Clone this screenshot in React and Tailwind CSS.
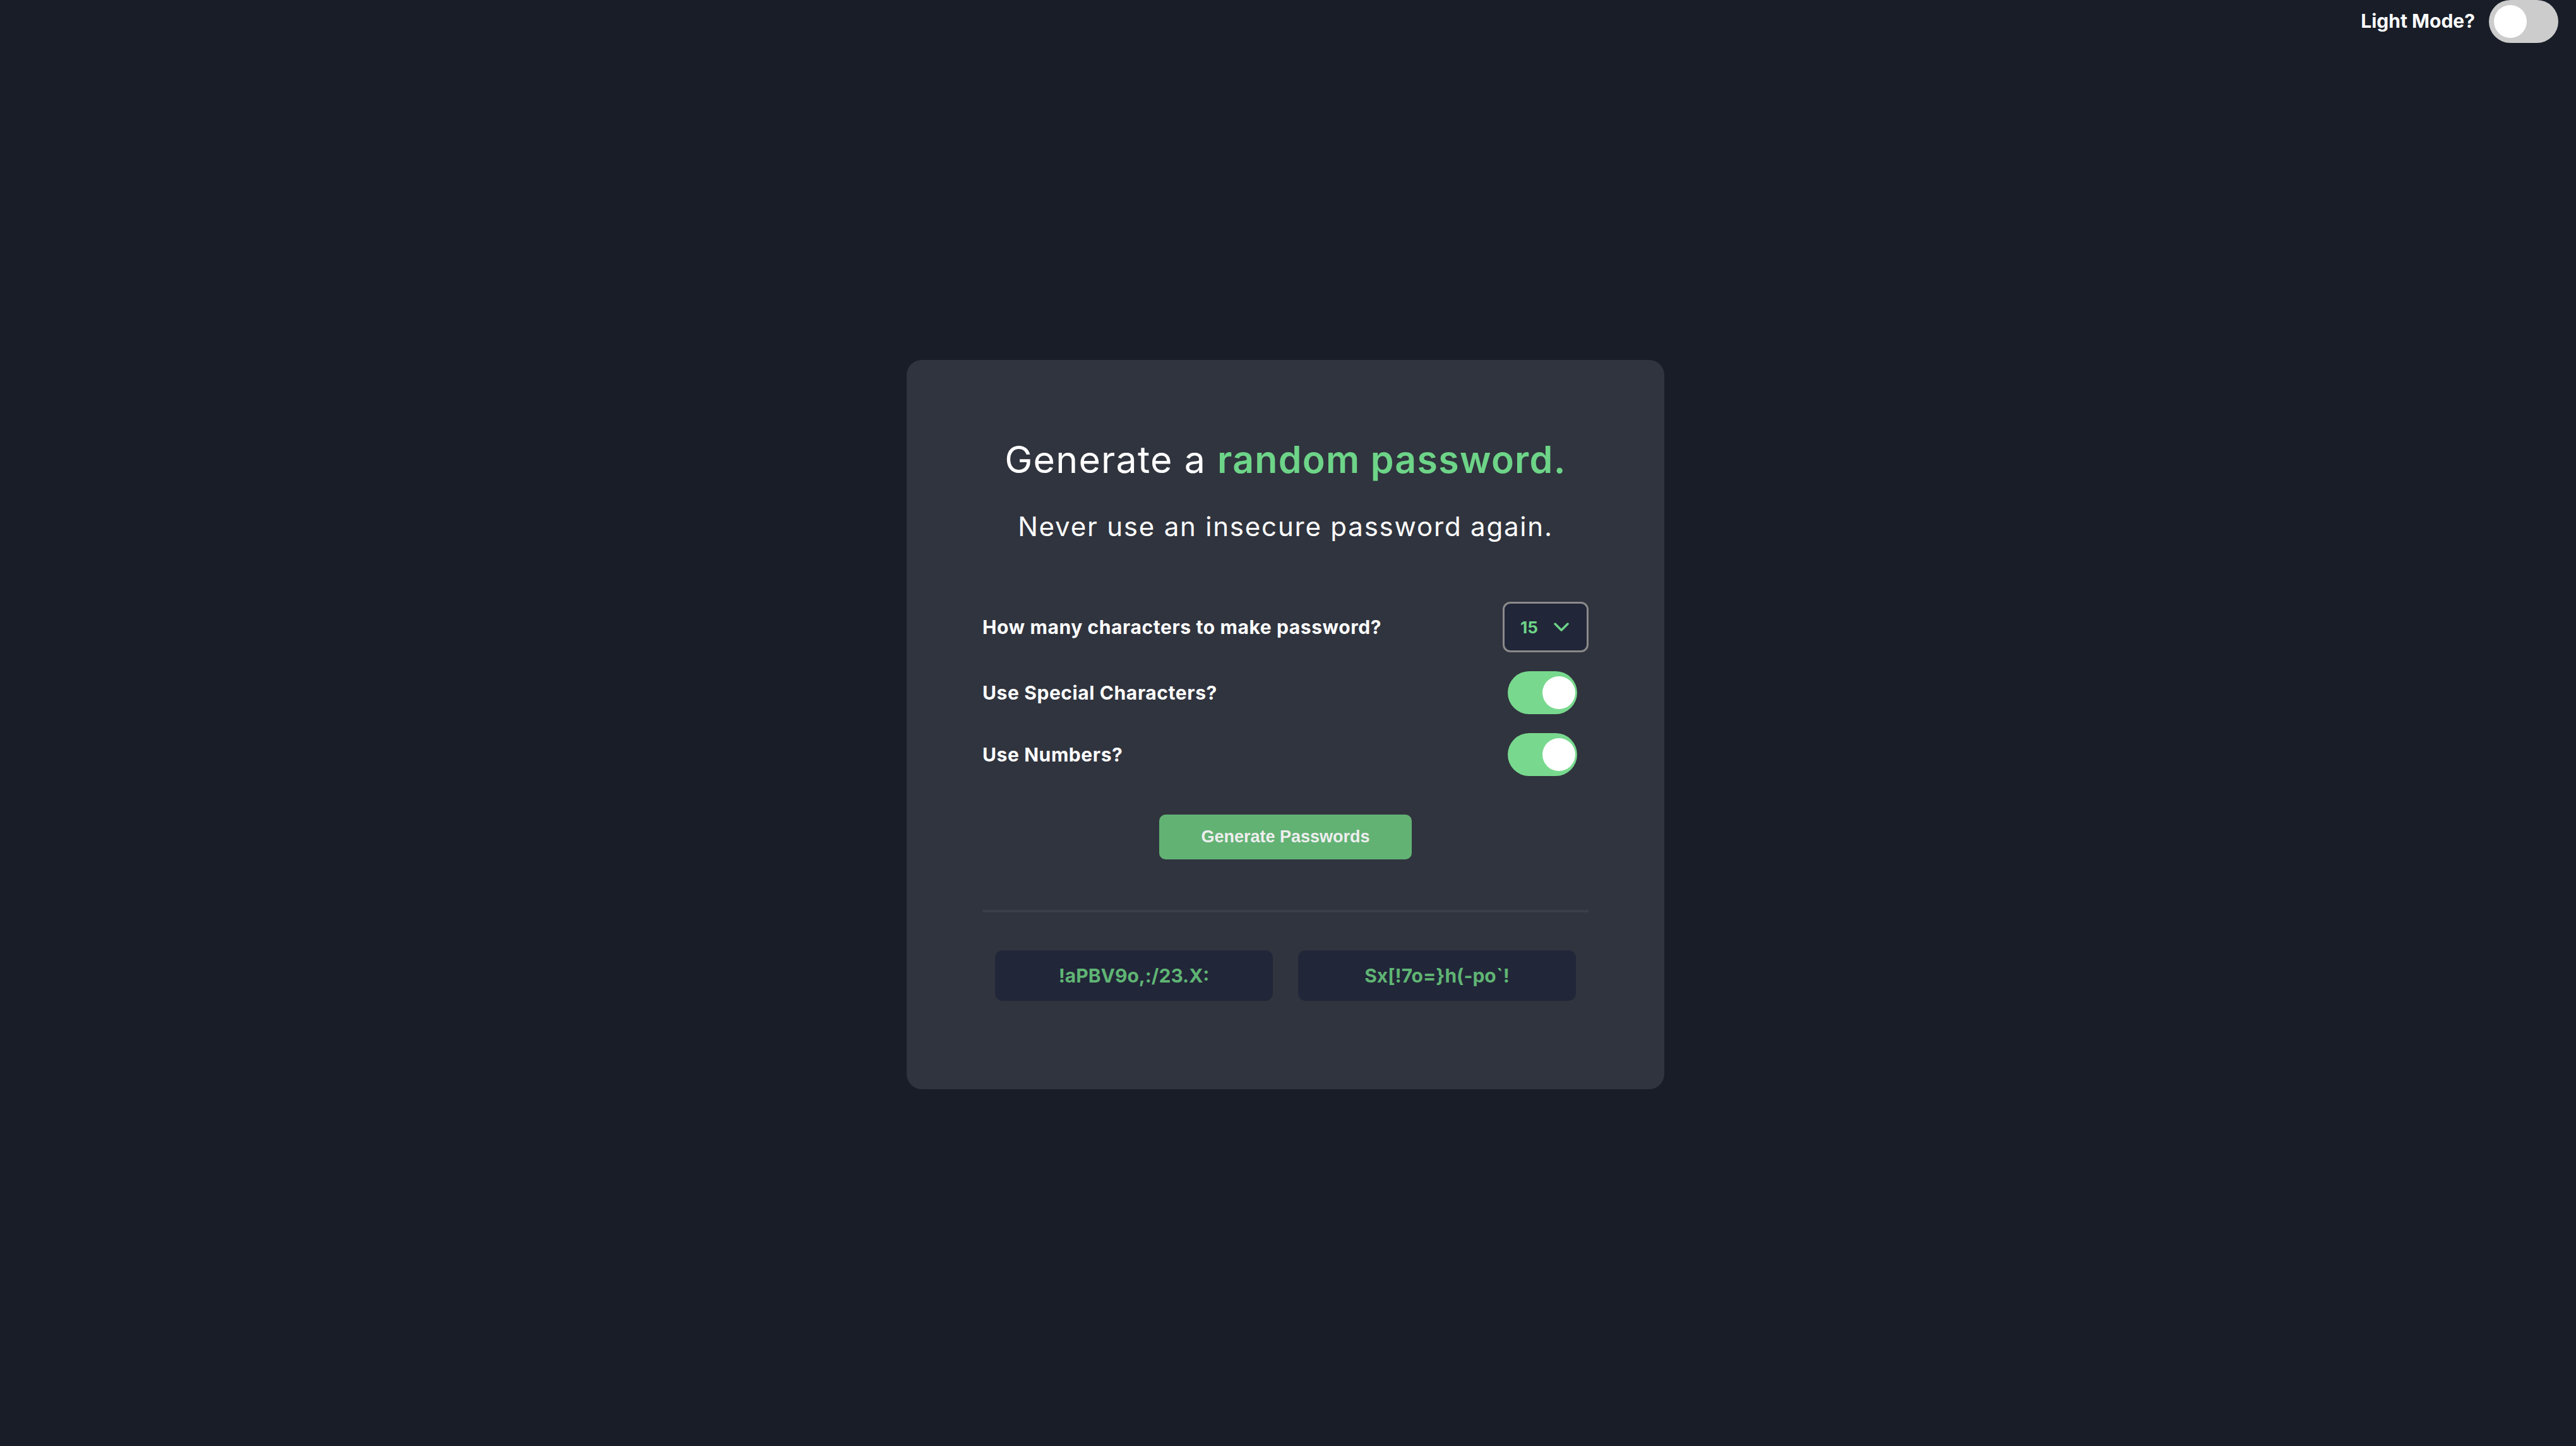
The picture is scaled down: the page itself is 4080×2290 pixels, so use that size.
import React, { useState } from 'react';

function Toggle({ on, onChange, light }) {
  return (
    <button
      onClick={onChange}
      className={`flex h-[68px] w-[110px] shrink-0 items-center rounded-full ${
        light ? 'bg-[#cccccc]' : on ? 'bg-[#78d98e]' : 'bg-[#cccccc]'
      } ${on ? 'justify-end pr-[3px]' : 'justify-start pl-[8px]'}`}
    >
      <span className="block h-[52px] w-[52px] rounded-full bg-white" />
    </button>
  );
}

function App() {
  const [light, setLight] = useState(false);
  const [special, setSpecial] = useState(true);
  const [numbers, setNumbers] = useState(true);
  const passwords = ['!aPBV9o,:/23.X:', 'Sx[!7o=}h(-po`!'];

  return (
    <div className="flex min-h-screen w-full flex-col bg-[#181d28] font-['Inter',sans-serif] text-white">
      <header className="flex h-[67px] items-center justify-end gap-[22px] pr-[28px]">
        <span className="text-[30px] font-bold">Light Mode?</span>
        <Toggle on={light} light onChange={() => setLight(!light)} />
      </header>

      <main className="flex flex-1 items-center justify-center pb-[62px] pr-[8px]">
        <div className="flex w-[1200px] flex-col items-center rounded-[24px] bg-[#30343e] px-[120px] pb-[140px] pt-[122px]">
          <h1 className="text-[59px] leading-[72px] font-normal tracking-[1.3px]">
            Generate a <span className="font-semibold text-[#6dd488]">random password.</span>
          </h1>
          <p className="mt-[45px] text-[42px] leading-[50px] tracking-[1.8px]">Never use an insecure password again.</p>

          <div className="mt-[94px] flex w-full flex-col gap-[30px]">
            <div className="flex items-center justify-between">
              <span className="text-[30px] font-bold tracking-[0.6px]">How many characters to make password?</span>
              <div className="flex h-[80px] w-[136px] items-center justify-between rounded-[12px] border-[3px] border-[#8a8a8a] bg-[#222639] pl-[25px] pr-[28px]">
                <span className="text-[26px] font-bold text-[#6dd488]">15</span>
                <svg width="24" height="15" viewBox="0 0 24 15" fill="none">
                  <path d="M2 2l10 10L22 2" stroke="#6dd488" strokeWidth="3.5" strokeLinecap="round" strokeLinejoin="round" />
                </svg>
              </div>
            </div>
            <div className="flex items-center justify-between">
              <span className="text-[30px] font-bold tracking-[0.6px]">Use Special Characters?</span>
              <div className="mr-[18px]">
                <Toggle on={special} onChange={() => setSpecial(!special)} />
              </div>
            </div>
            <div className="flex items-center justify-between">
              <span className="text-[30px] font-bold tracking-[0.6px]">Use Numbers?</span>
              <div className="mr-[18px]">
                <Toggle on={numbers} onChange={() => setNumbers(!numbers)} />
              </div>
            </div>
          </div>

          <button className="mt-[61px] h-[71px] w-[400px] rounded-[10px] bg-[#62b274] font-['Liberation_Sans',sans-serif] text-[27px] font-bold text-[#eeeeee]">
            Generate Passwords
          </button>

          <div className="mt-[80px] h-[4px] w-full bg-[#3a3e48]" />

          <div className="mt-[60px] flex w-full justify-center gap-[40px]">
            {passwords.map((p) => (
              <div
                key={p}
                className="flex h-[80px] w-[440px] items-center justify-center rounded-[12px] bg-[#222639] text-[30px] font-bold text-[#5fb574]"
              >
                {p}
              </div>
            ))}
          </div>
        </div>
      </main>
    </div>
  );
}

export default App;
